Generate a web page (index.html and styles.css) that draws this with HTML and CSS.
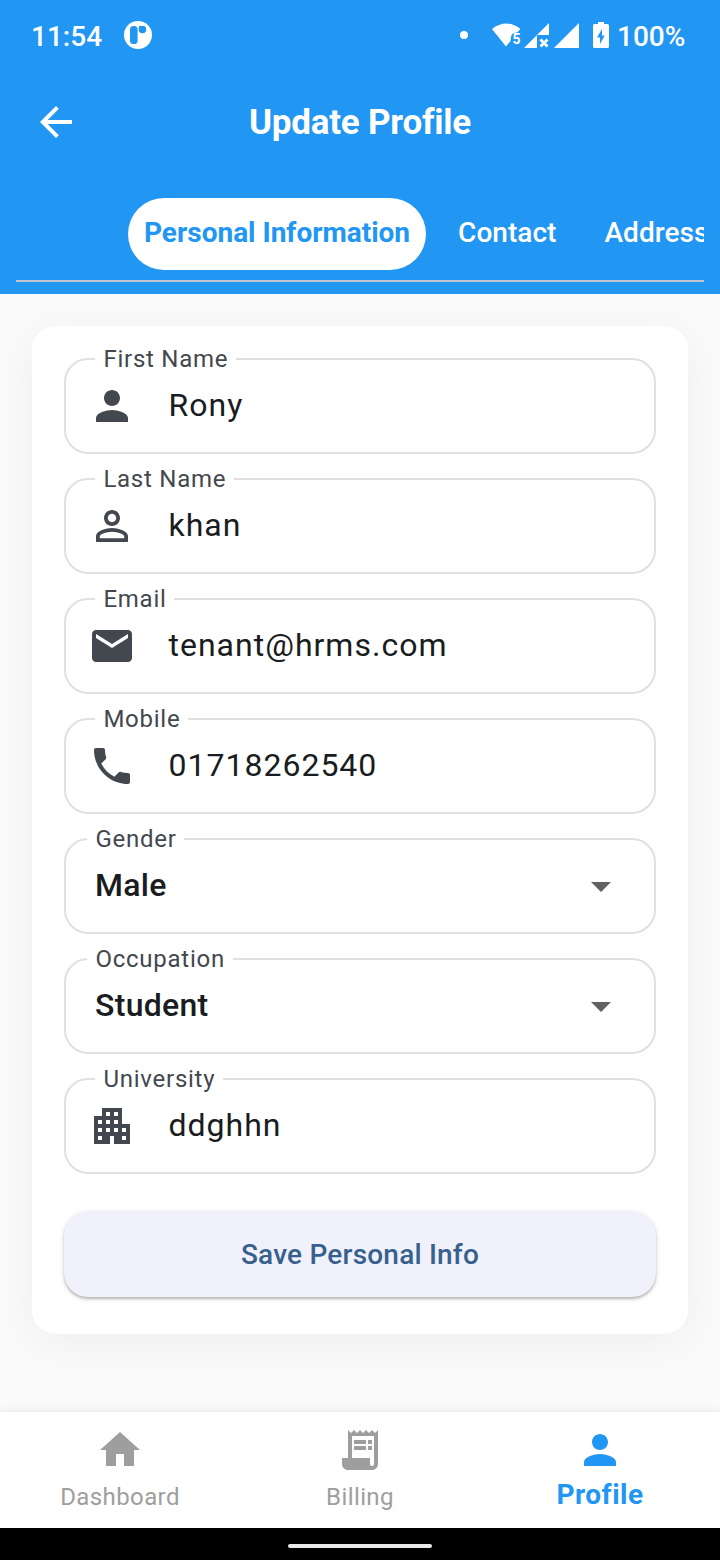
FILE: index.html
```
<!DOCTYPE html>
<html lang="en">
<head>
<meta charset="utf-8">
<title>Update Profile</title>
<link rel="stylesheet" href="styles.css">
</head>
<body>
<div class="screen">
  <header class="header">
    <div class="status">
      <span class="clock">11:54</span>
      <svg class="app-badge" viewBox="0 0 28 28"><circle cx="14" cy="14" r="14" fill="#fff"/><rect x="6" y="5" width="7.6" height="18" rx="3.6" fill="#2196f3"/><path d="M15 5h4.5q2.7 0 2.7 3.4a3.8 3.8 0 0 1-7.6 0Z" fill="#2196f3"/></svg>
      <svg class="status-icons" viewBox="0 0 152 32">
        <g fill="#fff">
          <circle cx="6" cy="17" r="4"/>
          <path d="M34 11Q48 0 62.500 11L59 14.500Q53.500 14.500 53 19L52.500 23L48 28.500Z"/>
          <text class="wifi-mark" x="54.500" y="25.800">5</text>
          <path d="M66 30L91 5V17H79V30Z"/>
          <path d="M82.500 21.500l7 7m0-7l-7 7" fill="none" stroke="#fff" stroke-width="2.800"/>
          <path d="M96 30L121 5V30Z"/>
          <path fill-rule="evenodd" d="M140 4h6v2h3.500q1.500 0 1.500 1.500v21q0 1.500-1.500 1.500h-13q-1.500 0-1.500-1.500v-21q0-1.500 1.500-1.500H140ZM144 11l-5 8.500h3V26l4.800-8.500H144Z"/>
        </g>
      </svg>
      <span class="battery">100%</span>
    </div>
    <div class="appbar">
      <svg class="icon back" viewBox="0 0 24 24"><path d="M20 11H7.830l5.590-5.590L12 4l-8 8 8 8 1.410-1.410L7.830 13H20z"/></svg>
      <h1 class="title">Update Profile</h1>
    </div>
    <nav class="tabs">
      <span class="tab tab-active">Personal Information</span>
      <span class="tab">Contact</span>
      <span class="tab">Address</span>
    </nav>
  </header>

  <main class="content">
    <form class="card">
      <div class="field">
        <label class="label">First Name</label>
        <svg class="icon" viewBox="0 0 24 24"><path d="M12 12c2.210 0 4-1.790 4-4s-1.790-4-4-4-4 1.790-4 4 1.790 4 4 4zm0 2c-2.670 0-8 1.340-8 4v2h16v-2c0-2.660-5.330-4-8-4z"/></svg>
        <span class="value">Rony</span>
      </div>
      <div class="field">
        <label class="label">Last Name</label>
        <svg class="icon" viewBox="0 0 24 24"><path d="M12 5.900c1.160 0 2.100.94 2.100 2.100s-.94 2.100-2.100 2.100S9.900 9.160 9.900 8s.94-2.100 2.100-2.100m0 9c2.970 0 6.100 1.460 6.100 2.100v1.100H5.900V17c0-.64 3.130-2.100 6.100-2.100M12 4C9.790 4 8 5.790 8 8s1.790 4 4 4 4-1.790 4-4-1.790-4-4-4zm0 9c-2.670 0-8 1.340-8 4v3h16v-3c0-2.660-5.330-4-8-4z"/></svg>
        <span class="value">khan</span>
      </div>
      <div class="field">
        <label class="label">Email</label>
        <svg class="icon" viewBox="0 0 24 24"><path d="M20 4H4c-1.100 0-1.990.9-1.990 2L2 18c0 1.100.9 2 2 2h16c1.100 0 2-.9 2-2V6c0-1.100-.9-2-2-2zm0 4l-8 5-8-5V6l8 5 8-5v2z"/></svg>
        <span class="value">tenant@hrms.com</span>
      </div>
      <div class="field">
        <label class="label">Mobile</label>
        <svg class="icon" viewBox="0 0 24 24"><path d="M6.620 10.790c1.440 2.830 3.760 5.140 6.590 6.590l2.200-2.200c.27-.27.67-.36 1.020-.24 1.120.37 2.330.57 3.570.57.55 0 1 .45 1 1V20c0 .55-.45 1-1 1-9.390 0-17-7.610-17-17 0-.55.45-1 1-1h3.500c.55 0 1 .45 1 1 0 1.250.2 2.450.57 3.570.11.35.03.74-.25 1.020l-2.200 2.200z"/></svg>
        <span class="value">01718262540</span>
      </div>
      <div class="field field-select">
        <label class="label">Gender</label>
        <span class="value">Male</span>
        <svg class="icon caret" viewBox="0 0 24 24"><path d="M7 10l5 5 5-5z"/></svg>
      </div>
      <div class="field field-select">
        <label class="label">Occupation</label>
        <span class="value">Student</span>
        <svg class="icon caret" viewBox="0 0 24 24"><path d="M7 10l5 5 5-5z"/></svg>
      </div>
      <div class="field">
        <label class="label">University</label>
        <svg class="icon" viewBox="0 0 24 24"><path d="M17 11V3H7v4H3v14h8v-4h2v4h8V11h-4zM7 19H5v-2h2v2zm0-4H5v-2h2v2zm0-4H5V9h2v2zm4 4H9v-2h2v2zm0-4H9V9h2v2zm0-4H9V5h2v2zm4 8h-2v-2h2v2zm0-4h-2V9h2v2zm0-4h-2V5h2v2zm4 12h-2v-2h2v2zm0-4h-2v-2h2v2z"/></svg>
        <span class="value">ddghhn</span>
      </div>
      <button class="save" type="button">Save Personal Info</button>
    </form>
  </main>

  <nav class="bottom-nav">
    <div class="nav-item">
      <svg class="icon" viewBox="0 0 24 24"><path d="M10 20v-6h4v6h5v-8h3L12 3 2 12h3v8z"/></svg>
      <span class="nav-label">Dashboard</span>
    </div>
    <div class="nav-item">
      <svg class="icon" viewBox="0 0 24 24"><path d="M19.500 3.500L18 2l-1.500 1.500L15 2l-1.500 1.500L12 2l-1.500 1.500L9 2 7.500 3.500 6 2v14H3v3c0 1.660 1.340 3 3 3h12c1.660 0 3-1.340 3-3V2l-1.500 1.500zM19 19c0 .55-.45 1-1 1s-1-.45-1-1v-3H8V5h11v14zM9 7h6v2H9zM16 7h2v2h-2zM9 10h6v2H9zM16 10h2v2h-2z"/></svg>
      <span class="nav-label">Billing</span>
    </div>
    <div class="nav-item nav-active">
      <svg class="icon" viewBox="0 0 24 24"><path d="M12 12c2.210 0 4-1.790 4-4s-1.790-4-4-4-4 1.790-4 4 1.790 4 4 4zm0 2c-2.670 0-8 1.340-8 4v2h16v-2c0-2.660-5.330-4-8-4z"/></svg>
      <span class="nav-label">Profile</span>
    </div>
  </nav>
  <div class="gesture"><span class="gesture-pill"></span></div>
</div>
</body>
</html>
```
FILE: styles.css
```
* { box-sizing: border-box; }
body { margin: 0; font-family: Roboto, "Liberation Sans", sans-serif; }
.screen { width: 720px; height: 1560px; display: flex; flex-direction: column; background: #fafafa; overflow: hidden; }
.icon { display: block; flex: none; width: 48px; height: 48px; fill: currentColor; }

.header { flex: none; height: 294px; background: #2196f3; color: #fff; }
.status { height: 72px; display: flex; align-items: center; padding: 0 34px 0 31px; font-size: 28px; font-weight: 500; line-height: 72px; }
.clock { width: 93px; padding-top: 1px; }
.app-badge { width: 28px; height: 28px; margin-bottom: 2px; }
.status-icons { width: 152px; height: 32px; margin-left: auto; margin-top: -4px; }
.wifi-mark { font-size: 14px; font-weight: 700; }
.battery { width: 69px; margin-left: 7px; padding-top: 1px; }
.appbar { height: 100px; display: grid; grid-template-columns: 48px 1fr 48px; align-items: center; padding: 0 32px; }
.title { margin: 0; padding-top: 2px; text-align: center; font-size: 35px; font-weight: 700; line-height: 42px; letter-spacing: -.22px; }
.tabs { display: flex; height: 110px; margin: 0 16px; padding: 26px 0 0 112px; overflow: hidden; border-bottom: 2px solid #c3c6cf; }
.tab { flex: none; height: 72px; padding: 0 16px; margin-right: 16px; border-radius: 36px; font-size: 28px; font-weight: 500; line-height: 69px; letter-spacing: .04px; }
.tab-active { background: #fff; color: #2196f3; font-weight: 700; letter-spacing: 0; }

.content { flex: 1; padding: 32px; }
.card { display: flex; flex-direction: column; gap: 24px; height: 1008px; padding: 32px; border-radius: 24px; background: #fff; box-shadow: 0 8px 40px rgba(0,0,0,.05); }
.field { position: relative; flex: none; display: flex; align-items: center; height: 96px; padding: 0 22px; border: 2px solid #e0e0e0; border-radius: 24px; color: #43474e; }
.label { position: absolute; top: -16px; left: 29px; padding: 0 7.600px 0 8.400px; background: #fff; font-size: 24px; line-height: 30px; letter-spacing: .75px; white-space: nowrap; }
.value { margin-left: 32.500px; padding-bottom: 2px; font-size: 32px; line-height: 38px; letter-spacing: 1px; color: #191c20; }
.field-select { padding: 0 29px; }
.field-select .label { left: 21px; }
.field-select .value { flex: 1; margin-left: 0; font-weight: 500; letter-spacing: .3px; }
.caret { color: #616161; }
.save { flex: none; height: 86px; margin-top: 13px; padding: 1px 0 0; border: 0; border-radius: 24px; background: #f1f1fb; color: #36618e; font-family: inherit; font-size: 28px; font-weight: 500; letter-spacing: .2px; box-shadow: 0 2px 2px rgba(0,0,0,.16), 0 2px 5px rgba(0,0,0,.16); }

.bottom-nav { flex: none; display: flex; height: 116px; background: #fff; color: #9e9e9e; box-shadow: 0 -1px 8px rgba(0,0,0,.08); }
.nav-item { flex: 1; display: flex; flex-direction: column; align-items: center; padding-top: 14px; }
.nav-label { margin-top: 9px; font-size: 24px; line-height: 28px; letter-spacing: .4px; }
.nav-active { color: #2196f3; }
.nav-active .nav-label { margin-top: 5px; font-size: 28px; font-weight: 700; line-height: 32px; letter-spacing: .5px; }
.gesture { flex: none; display: flex; align-items: center; justify-content: center; height: 32px; padding-top: 4px; background: #000; }
.gesture-pill { width: 144px; height: 4px; border-radius: 2px; background: #e8e8e8; }
```
